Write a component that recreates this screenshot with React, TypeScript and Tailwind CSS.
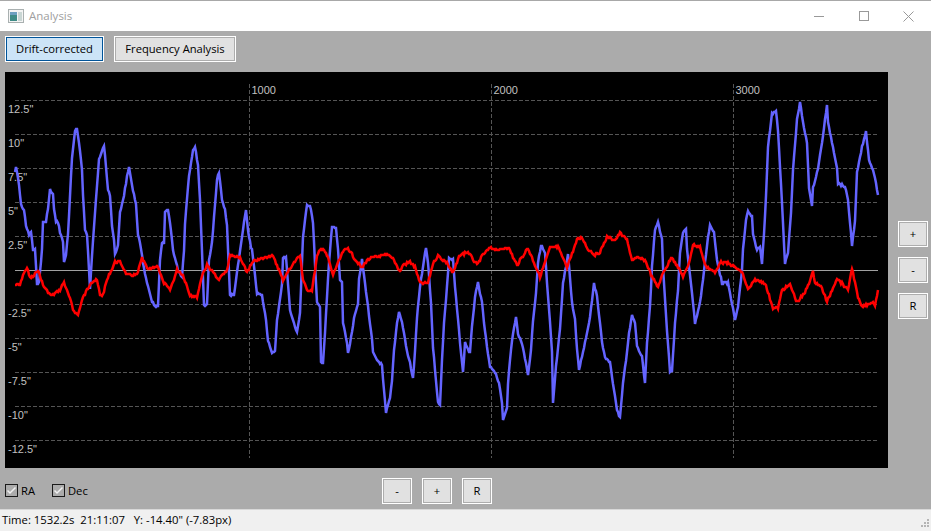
import { Fragment } from "react";

const raBlue: number[][] = [
  [15,172],[16,167],[19,185],[21,205],[24,210],[26,225],[29,235],[31,232],[33,250],[35,250],[37,283],[39,283],[42,250],[43,222],[46,222],[48,208],[50,190],[53,195],[54,208],[56,222],[58,222],[60,232],[63,242],[64,262],[66,255],[68,235],[72,158],[75,130],[77,129],[80,150],[82,170],[83,195],[85,230],[87,235],[88,250],[90,288],[92,255],[95,213],[99,160],[104,145],[108,190],[110,195],[112,225],[114,240],[115,255],[118,245],[120,213],[124,195],[127,177],[129,168],[133,190],[136,205],[138,235],[140,243],[145,275],[152,302],[156,307],[158,305],[160,260],[162,243],[164,243],[165,213],[168,210],[170,223],[172,240],[173,250],[178,270],[182,277],[184,250],[185,223],[189,175],[193,150],[195,147],[198,165],[200,200],[202,250],[204,305],[207,305],[209,260],[212,243],[217,180],[219,172],[222,200],[225,210],[227,225],[230,295],[234,295],[236,280],[243,230],[246,210],[248,230],[251,248],[252,250],[257,293],[262,296],[266,320],[268,340],[272,353],[275,352],[277,320],[282,285],[283,257],[286,257],[290,310],[297,333],[300,313],[303,237],[307,205],[310,205],[312,215],[313,223],[317,303],[320,307],[321,362],[323,362],[325,333],[327,297],[329,263],[332,227],[336,228],[338,250],[340,280],[342,283],[343,323],[347,343],[348,353],[352,333],[354,317],[358,303],[359,280],[362,260],[365,283],[368,307],[372,340],[373,353],[377,360],[382,365],[383,380],[386,413],[390,398],[392,380],[394,350],[397,323],[399,312],[402,322],[404,333],[407,352],[410,363],[413,379],[415,352],[417,317],[420,287],[423,267],[426,248],[428,263],[431,303],[433,347],[436,380],[438,403],[440,405],[442,360],[444,323],[447,287],[449,258],[453,260],[455,287],[458,320],[461,353],[463,373],[465,343],[470,353],[472,327],[475,297],[478,283],[482,303],[484,323],[487,347],[490,367],[495,372],[499,383],[502,403],[503,420],[507,407],[508,383],[511,350],[513,333],[516,318],[518,333],[523,347],[525,358],[528,375],[531,350],[533,320],[536,293],[538,263],[541,245],[545,253],[547,283],[550,323],[552,353],[553,403],[556,367],[560,330],[563,283],[566,267],[568,253],[572,303],[575,320],[577,350],[579,370],[583,352],[587,333],[590,317],[594,283],[597,297],[600,322],[602,343],[605,357],[610,363],[613,383],[617,410],[620,418],[623,383],[627,353],[629,333],[632,315],[635,323],[637,347],[642,357],[645,383],[647,343],[650,307],[652,267],[655,230],[658,222],[662,240],[663,267],[667,330],[670,372],[672,370],[675,323],[678,290],[680,253],[683,232],[686,230],[687,250],[691,283],[695,323],[700,303],[703,280],[708,237],[710,225],[714,233],[717,260],[722,283],[728,283],[732,303],[735,320],[738,307],[742,270],[743,250],[746,220],[748,212],[752,217],[753,235],[757,250],[760,247],[762,263],[764,233],[766,197],[768,147],[772,113],[776,112],[778,130],[780,167],[782,203],[785,263],[788,253],[791,213],[793,170],[797,120],[800,102],[803,123],[807,143],[809,187],[812,207],[813,188],[818,168],[822,143],[827,105],[828,123],[833,147],[837,167],[838,183],[845,187],[848,200],[850,223],[852,245],[855,222],[857,173],[862,147],[866,132],[869,160],[872,167],[875,177],[878,195],
];

const decRed: number[][] = [
  [15,285],[20,285],[23,275],[27,268],[30,278],[33,277],[38,270],[43,285],[50,295],[53,295],[60,290],[64,282],[72,305],[73,310],[78,315],[82,300],[87,290],[91,282],[97,280],[100,295],[103,295],[107,280],[115,262],[120,262],[127,275],[137,275],[142,258],[148,270],[158,266],[163,282],[170,290],[177,270],[183,275],[190,295],[197,297],[202,275],[207,265],[213,272],[218,280],[227,270],[230,255],[240,258],[247,272],[253,262],[263,258],[272,255],[277,265],[283,280],[290,268],[300,255],[303,280],[307,290],[312,290],[317,257],[320,250],[323,248],[328,258],[333,275],[338,263],[343,252],[348,248],[357,262],[362,268],[367,260],[375,257],[387,255],[393,258],[400,272],[403,265],[410,262],[415,267],[420,283],[428,283],[433,263],[438,256],[447,263],[453,273],[460,255],[468,252],[477,265],[483,255],[490,248],[500,250],[508,247],[517,265],[528,248],[533,260],[540,277],[550,248],[558,247],[567,267],[577,240],[582,237],[587,248],[595,255],[600,252],[607,237],[615,240],[620,233],[627,240],[632,260],[638,258],[645,260],[652,277],[658,287],[663,273],[672,257],[678,267],[683,276],[688,267],[693,245],[700,247],[705,265],[715,273],[720,262],[728,263],[742,272],[748,290],[755,280],[765,283],[773,308],[778,308],[782,290],[790,285],[797,302],[805,293],[813,272],[815,282],[822,288],[827,302],[837,278],[848,290],[852,268],[858,298],[862,307],[872,302],[875,305],[878,290],
];

// fill in between the read points with a little noise, the trace is jittery
function tracePoints(points: number[][], amp: number) {
  const out: string[] = [];
  let seed = 7;
  for (let i = 0; i < points.length - 1; i++) {
    const [x0, y0] = points[i];
    const [x1, y1] = points[i + 1];
    for (let x = x0; x < x1; x++) {
      seed = (seed * 9301 + 49297) % 233280;
      const n = (seed / 233280 - 0.5) * amp;
      const y = y0 + ((y1 - y0) * (x - x0)) / (x1 - x0);
      out.push(`${x},${Math.round(y + n)}`);
    }
  }
  const last = points[points.length - 1];
  out.push(`${last[0]},${last[1]}`);
  return out.join(" ");
}

const hLines = [100, 134, 168, 202, 236, 304, 338, 372, 406, 440];
const vLines = [
  { x: 249.5, label: "1000" },
  { x: 491.5, label: "2000" },
  { x: 733.5, label: "3000" },
];
const yLabels = [
  { y: 113, t: '12.5"' },
  { y: 147, t: '10"' },
  { y: 181, t: '7.5"' },
  { y: 215, t: '5"' },
  { y: 249, t: '2.5"' },
  { y: 317, t: '-2.5"' },
  { y: 351, t: '-5"' },
  { y: 385, t: '-7.5"' },
  { y: 419, t: '-10"' },
  { y: 453, t: '-12.5"' },
];

function SmallButton({ label }: { label: string }) {
  return (
    <button className="flex h-[26px] w-[30px] items-center justify-center border-2 border-white bg-[#e1e1e1] text-[11.2px] text-black outline outline-1 -outline-offset-2 outline-[#adadad]">
      {label}
    </button>
  );
}

function Check({ label, width }: { label: string; width: string }) {
  return (
    <label className={`flex items-center gap-[3px] text-[11.2px] text-black ${width}`}>
      <span className="flex h-[13px] w-[13px] items-center justify-center border border-[#1a1a1a] bg-[#ababab]">
        <svg width="11" height="11" viewBox="0 0 11 11" fill="none">
          <path d="M1.5 5.5 L4 8 L9.5 2.5" stroke="#f0f0f0" strokeWidth="1.5" />
        </svg>
      </span>
      {label}
    </label>
  );
}

export default function App() {
  return (
    <div className="flex h-[531px] w-[931px] flex-col overflow-hidden bg-[#ababab] font-['Open_Sans','Noto_Sans',sans-serif]">
      {/* Title bar */}
      <div className="h-px bg-[#a8a8a8]" />
      <div className="flex h-[30px] items-center bg-white pl-2">
        <svg width="16" height="16" viewBox="0 0 16 16">
          <rect x="0.5" y="1.5" width="15" height="13" fill="#f4f4f4" stroke="#a9b0b0" />
          <rect x="2" y="4" width="7" height="9" fill="#3f8b86" />
          <rect x="2" y="4" width="7" height="3" fill="#6d9fc0" />
          <rect x="10" y="4" width="4" height="9" fill="#c9d6d4" />
        </svg>
        <span className="ml-[5px] text-[11.5px] text-[#a0a0a0]">Analysis</span>
        <div className="ml-auto flex items-center">
          <div className="flex w-[45px] justify-center">
            <div className="h-px w-[10px] bg-[#999]" />
          </div>
          <div className="flex w-[45px] justify-center">
            <div className="h-[10px] w-[10px] border border-[#999]" />
          </div>
          <div className="flex w-[45px] justify-center">
            <svg width="11" height="11" viewBox="0 0 11 11" stroke="#999" strokeWidth="1">
              <path d="M0.5 0.5 L10.5 10.5 M10.5 0.5 L0.5 10.5" />
            </svg>
          </div>
        </div>
      </div>

      {/* Tabs */}
      <div className="flex gap-[10px] pl-[5px] pt-[5px]">
        <button className="flex h-[26px] w-[99px] items-center justify-center border border-white bg-[#cce4f7] text-[11.2px] text-black outline outline-1 -outline-offset-2 outline-[#005499]">
          Drift-corrected
        </button>
        <button className="flex h-[26px] w-[122px] items-center justify-center border-2 border-white bg-[#e1e1e1] text-[11.2px] text-black outline outline-1 -outline-offset-2 outline-[#adadad]">
          Frequency Analysis
        </button>
      </div>

      {/* Chart and side buttons */}
      <div className="mt-[10px] flex pl-[5px]">
        <div className="h-[396px] w-[883px] bg-black">
          <svg width="883" height="396" viewBox="5 72 883 396" className="block">
            {hLines.map((y) => (
              <line key={y} x1="15" x2="878" y1={y + 0.5} y2={y + 0.5} stroke="#555" strokeDasharray="4 2" />
            ))}
            {vLines.map((v) => (
              <Fragment key={v.x}>
                <line x1={v.x} x2={v.x} y1="84" y2="458" stroke="#555" strokeDasharray="4 2" />
                <text x={v.x + 2} y="94" fill="#c0c0c0" fontSize="11" fontFamily="'Liberation Sans', sans-serif">
                  {v.label}
                </text>
              </Fragment>
            ))}
            {yLabels.map((l) => (
              <text key={l.t} x="8" y={l.y} fill="#c0c0c0" fontSize="11" fontFamily="'Liberation Sans', sans-serif">
                {l.t}
              </text>
            ))}
            <line x1="15" x2="878" y1="270.5" y2="270.5" stroke="#a0a0a0" />
            <polyline points={tracePoints(raBlue, 2)} fill="none" stroke="#6464ff" strokeWidth="2.5" />
            <polyline points={tracePoints(decRed, 2.5)} fill="none" stroke="#ff0000" strokeWidth="2.5" />
          </svg>
        </div>
        <div className="flex flex-col gap-[10px] pl-[10px] pt-[149px]">
          <SmallButton label="+" />
          <SmallButton label="-" />
          <SmallButton label="R" />
        </div>
      </div>

      {/* Bottom controls */}
      <div className="mt-[10px] flex h-[26px] items-center pl-[5px]">
        <div className="flex w-[377px] items-center">
          <Check label="RA" width="w-[47px]" />
          <Check label="Dec" width="w-[60px]" />
        </div>
        <div className="flex gap-[10px]">
          <SmallButton label="-" />
          <SmallButton label="+" />
          <SmallButton label="R" />
        </div>
      </div>

      {/* Status bar */}
      <div className="relative mt-[5px] flex flex-1 items-center border-t border-[#d8d8d8] bg-[#f0f0f0] pl-[2px] text-[11.3px] text-black">
        <span className="whitespace-pre">Time: 1532.2s  21:11:07   Y: -14.40" (-7.83px)</span>
        <svg width="12" height="12" viewBox="0 0 12 12" className="absolute bottom-0 right-0" fill="#b4b4b4">
          <rect x="8" y="0" width="2" height="2" />
          <rect x="5" y="3" width="2" height="2" />
          <rect x="8" y="3" width="2" height="2" />
          <rect x="2" y="6" width="2" height="2" />
          <rect x="5" y="6" width="2" height="2" />
          <rect x="8" y="6" width="2" height="2" />
        </svg>
      </div>
    </div>
  );
}
